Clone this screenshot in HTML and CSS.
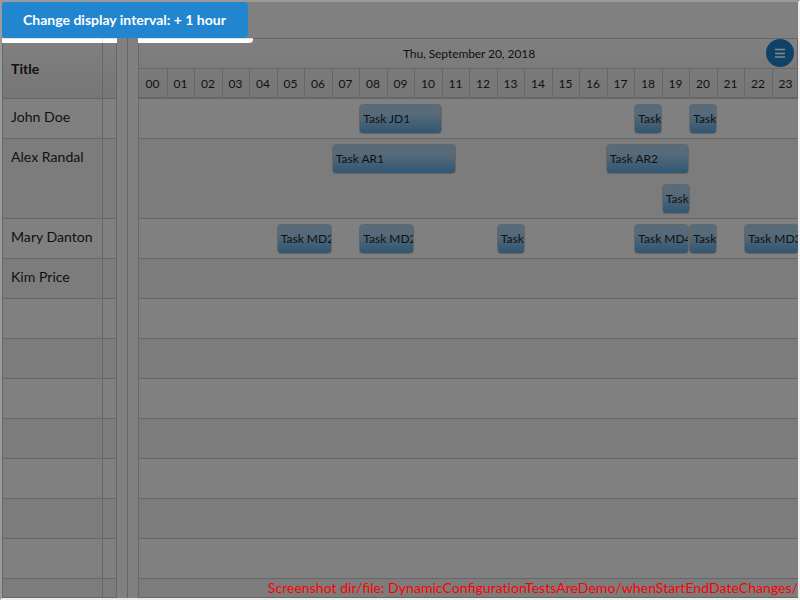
FILE: index.html
```
<!DOCTYPE html>
<html lang="en">
<head>
<meta charset="utf-8">
<title>Schedule</title>
<link rel="stylesheet" href="styles.css">
</head>
<body>
<div class="frame">
  <div class="toolbar"><button class="primary">Change display interval: + 1 hour</button></div>
  <div class="schedule">
    <div class="names">
      <div class="names-head"><span class="cell">Title</span><span class="gutter"></span></div>
      <div class="row"><span class="cell">John Doe</span><span class="gutter"></span></div>
      <div class="row alt tall"><span class="cell">Alex Randal</span><span class="gutter"></span></div>
      <div class="row"><span class="cell">Mary Danton</span><span class="gutter"></span></div>
      <div class="row alt"><span class="cell">Kim Price</span><span class="gutter"></span></div>
      <div class="row"><span class="cell"></span><span class="gutter"></span></div>
      <div class="row alt"><span class="cell"></span><span class="gutter"></span></div>
      <div class="row"><span class="cell"></span><span class="gutter"></span></div>
      <div class="row alt"><span class="cell"></span><span class="gutter"></span></div>
      <div class="row"><span class="cell"></span><span class="gutter"></span></div>
      <div class="row alt"><span class="cell"></span><span class="gutter"></span></div>
      <div class="row"><span class="cell"></span><span class="gutter"></span></div>
      <div class="row alt last"><span class="cell"></span><span class="gutter"></span></div>
      <div class="glow"></div>
    </div>
    <div class="splitter"></div>
    <div class="timeline">
      <div class="head">
        <div class="date">Thu, September 20, 2018</div>
        <div class="hours"><span>00</span><span>01</span><span>02</span><span>03</span><span>04</span><span>05</span><span>06</span><span>07</span><span>08</span><span>09</span><span>10</span><span>11</span><span>12</span><span>13</span><span>14</span><span>15</span><span>16</span><span>17</span><span>18</span><span>19</span><span>20</span><span>21</span><span>22</span><span>23</span></div>
      </div>
      <div class="row track">
        <div class="task" style="grid-column:9 / span 3">Task JD1</div>
        <div class="task" style="grid-column:19">Task</div>
        <div class="task" style="grid-column:21">Task</div>
      </div>
      <div class="row alt tall track">
        <div class="task half-over" style="grid-column:8 / span 4">Task AR1</div>
        <div class="task early" style="grid-column:18 / span 3">Task AR2</div>
        <div class="task second" style="grid-column:20">Task</div>
      </div>
      <div class="row track">
        <div class="task" style="grid-column:6 / span 2">Task MD2</div>
        <div class="task" style="grid-column:9 / span 2">Task MD2</div>
        <div class="task wide" style="grid-column:14">Task</div>
        <div class="task" style="grid-column:19 / span 2">Task MD4</div>
        <div class="task" style="grid-column:21">Task</div>
        <div class="task" style="grid-column:23 / span 2">Task MD3</div>
      </div>
      <div class="row alt"></div>
      <div class="row"></div>
      <div class="row alt"></div>
      <div class="row"></div>
      <div class="row alt"></div>
      <div class="row"></div>
      <div class="row alt"></div>
      <div class="row"></div>
      <div class="row alt last"></div>
      <div class="glow rounded"></div>
      <div class="menu"><svg width="10" height="10" viewBox="0 0 10 10"><path d="M0 1.5H10M0 5.5H10M0 9H10" stroke="#828990" stroke-width="1.4"/></svg></div>
    </div>
  </div>
  <div class="caption">Screenshot dir/file: DynamicConfigurat&zwnj;ionTestsAreDemo/whenStartEndDateChanges/</div>
</div>
</body>
</html>
```

FILE: styles.css
```
* { box-sizing: border-box; }
body { margin: 0; overflow: hidden; font: 14px/20px Lato, "Liberation Sans", sans-serif; color: #111; }
.frame { position: relative; width: 800px; height: 600px; border: 2px solid; border-color: #9a9a9a #eee #eee #9a9a9a; background: #808080; overflow: hidden; }
.toolbar { height: 36px; }
.primary { display: block; width: 246px; height: 36px; padding: 0 1px 0 0; border: 0; border-radius: 4px; background: #2185d0; color: #fff; font: bold 14px/14px Lato, sans-serif; }
.schedule { display: flex; height: 560px; }
.names { position: relative; width: 115px; border: 1px solid #676767; border-bottom-width: 2px; font-size: 14.1px; }
.names-head { display: flex; height: 60px; border-bottom: 1px solid #676767; background: linear-gradient(#808080, #767676); font-weight: bold; line-height: 60px; }
.cell { width: 99px; padding-left: 8px; white-space: nowrap; }
.gutter { flex: 1; border-left: 1px solid #676767; }
.row { display: flex; height: 40px; border-bottom: 1px solid #676767; line-height: 36px; }
.alt { background: #7c7c7c; }
.tall { height: 80px; }
.row.last { height: 18px; border-bottom: 0; }
.splitter { width: 21px; background: linear-gradient(90deg, transparent 10px, #676767 10px, #676767 11px, transparent 11px); }
.timeline { position: relative; flex: 1; min-width: 0; border: 1px solid #676767; border-right: 0; }
.head { height: 60px; border-right: 1px solid #676767; border-bottom: 2px solid #676767; background: linear-gradient(#808080, #767676); font-size: 12px; overflow: hidden; }
.date { height: 30px; padding-left: 2px; border-bottom: 1px solid #676767; line-height: 29px; text-align: center; letter-spacing: -.08px; }
.hours { display: flex; height: 28px; line-height: 30px; }
.hours span { flex: 0 0 28px; padding-right: 1px; border-left: 1px solid #676767; text-align: center; }
.hours span:nth-child(even) { flex-basis: 27px; }
.hours span:first-child { border-left: 0; }
.row.track { display: grid; grid-template-columns: repeat(24, 27.5px); grid-auto-rows: 40px; padding-left: .25px; }
.task { grid-row: 1; height: 30px; margin-top: 5px; padding-left: 3px; border: 1px solid #666; border-radius: 4px; background: linear-gradient(#586b7a, #566a79 35%, #2f5673); font-size: 12px; line-height: 27px; white-space: nowrap; overflow: hidden; }
.early { margin-left: -1px; }
.half-over { margin-right: -14px; }
.wide { margin-right: -.5px; }
.second { grid-row: 2; margin-right: -.5px; }
.glow { position: absolute; top: -1px; left: -1px; width: 115px; height: 5px; background: linear-gradient(#e2e2e2 1px, #fff 1px); }
.names .glow { background: linear-gradient(90deg, transparent 100px, #ddd 100px, #ddd 101px, transparent 101px), linear-gradient(#e2e2e2 1px, #fff 1px); }
.rounded { border-bottom-right-radius: 4px; }
.menu { position: absolute; top: 0; right: 4px; width: 28px; height: 28px; border-radius: 50%; background: #104268; display: flex; align-items: center; justify-content: center; }
.caption { position: absolute; right: 0; bottom: 0; color: #f00; font-size: 14.08px; line-height: 20px; white-space: nowrap; }
```
